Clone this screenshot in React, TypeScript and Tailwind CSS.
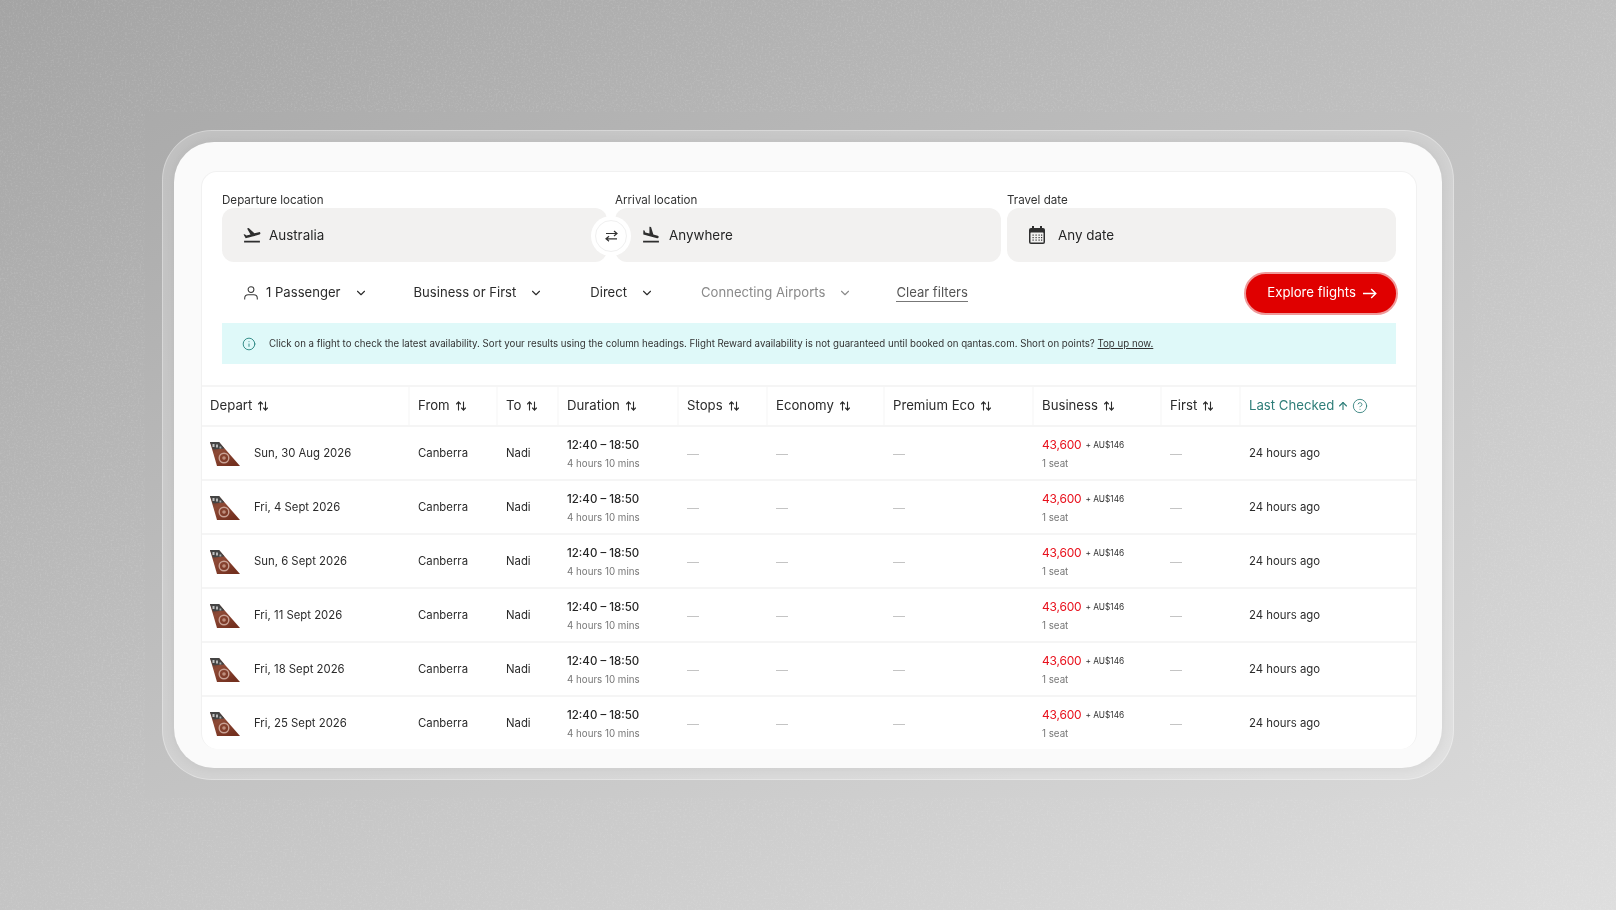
import React from "react";
import { ArrowUp, ArrowUpDown, ChevronDown, CircleHelp, Info } from "lucide-react";
import { MdFlightLand, MdFlightTakeoff } from "react-icons/md";

const cols = "grid grid-cols-[208px_88px_61px_120px_89px_117px_149px_128px_79px_1fr]";

const rows = [
  "Sun, 30 Aug 2026",
  "Fri, 4 Sept 2026",
  "Sun, 6 Sept 2026",
  "Fri, 11 Sept 2026",
  "Fri, 18 Sept 2026",
  "Fri, 25 Sept 2026",
];

const headers = ["Depart", "From", "To", "Duration", "Stops", "Economy", "Premium Eco", "Business", "First"];

function Tail() {
  return (
    <svg width="30" height="25" viewBox="0 0 30 25" className="shrink-0 blur-[0.4px]">
      <defs>
        <linearGradient id="tailg" x1="0" y1="0" x2="0.7" y2="1">
          <stop offset="0" stopColor="#5a3026" />
          <stop offset="0.4" stopColor="#8e4a36" />
          <stop offset="1" stopColor="#74301f" />
        </linearGradient>
      </defs>
      <polygon points="0,1 9,1 30,25 7,25" fill="url(#tailg)" />
      <polygon points="0,1 9,1 14.5,7.5 3,8.5" fill="#444444" />
      <rect x="2.5" y="3" width="2" height="3" fill="#c4c4c4" />
      <rect x="6" y="3.5" width="2" height="3" fill="#b8b8b8" />
      <rect x="9.5" y="5.5" width="1.8" height="2" fill="#aaaaaa" />
      <circle cx="14" cy="17" r="4.8" fill="none" stroke="#c9a194" strokeWidth="1.4" />
      <circle cx="14" cy="17" r="1.8" fill="#bd8d7c" />
    </svg>
  );
}

function Calendar() {
  return (
    <svg width="16" height="18" viewBox="0 0 16 18" className="shrink-0">
      <rect x="3" y="0" width="2" height="3.5" fill="#2f2f2f" />
      <rect x="11" y="0" width="2" height="3.5" fill="#2f2f2f" />
      <rect x="0" y="2" width="16" height="16" rx="2" fill="#2f2f2f" />
      <rect x="1.5" y="6.5" width="13" height="10" rx="0.6" fill="#f2f1f0" />
      {[3.5, 6.5, 9.5, 12].map((x) =>
        [8.5, 11, 13.5].map((y) => <rect key={`${x}-${y}`} x={x} y={y} width="1.2" height="1.2" fill="#2f2f2f" />)
      )}
    </svg>
  );
}

function Person() {
  return (
    <svg width="14" height="14" viewBox="0 0 14 14" fill="none" stroke="#3a3a3a" strokeWidth="1.05" className="shrink-0">
      <circle cx="7" cy="3.6" r="2.9" />
      <path d="M0.7 13.5v-1.2c0-2.2 1.6-3.6 3.6-3.6h5.4c2 0 3.6 1.4 3.6 3.6v1.2" />
    </svg>
  );
}

function Swap() {
  return (
    <svg width="13" height="12" viewBox="0 0 13 12" fill="none" stroke="#333" strokeWidth="1.2">
      <path d="M1 3.5h11M9 1l3 2.5L9 6" />
      <path d="M12 8.8H1M4 6.3L1 8.8l3 2.5" />
    </svg>
  );
}

function Field({ label, className, children }: { label: string; className: string; children: React.ReactNode }) {
  return (
    <div className={className}>
      <div className="h-[16px] text-[11.6px] leading-[16px] text-[#333333]">{label}</div>
      <div className="h-[54px] text-[13.4px] text-[#262626]">{children}</div>
    </div>
  );
}

function Filter({ label, muted, className = "" }: { label: string; muted?: boolean; className?: string }) {
  return (
    <div className={`flex items-center gap-[13px] ${muted ? "text-[#8a8a8a]" : "text-[#2b2b2b]"} ${className}`}>
      <span>{label}</span>
      <ChevronDown size={14} strokeWidth={1.9} />
    </div>
  );
}

function Dash() {
  return <span className="text-[12px] text-[#c4c4c4]">—</span>;
}

export default function App() {
  return (
    <div
      className="relative h-[910px] w-full overflow-hidden bg-[linear-gradient(155deg,#a4a4a4_0%,#bcbcbc_40%,#cdcdcd_70%,#dedede_100%)] pl-[162px] pt-[130px]"
      style={{ fontFamily: "Inter, 'Liberation Sans', sans-serif" }}
    >
      <svg className="pointer-events-none absolute inset-0 h-full w-full">
        <defs>
          <filter id="noise" x="0" y="0" width="100%" height="100%">
            <feTurbulence type="fractalNoise" baseFrequency="0.55" numOctaves="2" seed="4" />
            <feColorMatrix type="matrix" values="0 0 0 0 1  0 0 0 0 1  0 0 0 0 1  0 0 0 2.2 -1.05" />
            <feGaussianBlur stdDeviation="0.4" />
          </filter>
          <clipPath id="noiseclip">
            <path clipRule="evenodd" d="M0 0H1616V910H0ZM145 112V798H1472V112Z" />
          </clipPath>
        </defs>
        <g clipPath="url(#noiseclip)" opacity="0.14">
          <rect width="100%" height="100%" filter="url(#noise)" />
        </g>
      </svg>

      <div className="relative h-[650px] w-[1292px] rounded-[50px] border border-white/30 bg-white/25 p-[11px] blur-[0.3px]">
        <div className="h-full w-full rounded-[40px] bg-[#fafafa] pb-[19px] pl-[27px] pr-[25px] pt-[29px] shadow-[0_0_12px_rgba(0,0,0,0.07)]">
          <div className="h-full overflow-hidden rounded-[16px] border border-b-0 border-[#f1f1f1] bg-white">
            <div className="px-[20px] pb-[21px] pt-[20px]">
              <div className="flex">
                <Field label="Departure location" className="w-[393px]">
                  <div className="flex h-full w-[385px] items-center gap-[7px] rounded-[12px] bg-[#f2f1f0] pl-[20px]">
                    <MdFlightTakeoff size={20} color="#2f2f2f" />
                    <span>Australia</span>
                  </div>
                </Field>
                <Field label="Arrival location" className="relative w-[392px]">
                  <div className="flex h-full w-[386px] items-center gap-[8px] rounded-[12px] bg-[#f2f1f0] pl-[26px]">
                    <MdFlightLand size={20} color="#2f2f2f" />
                    <span>Anywhere</span>
                  </div>
                  <div className="absolute left-[-24px] top-[24px] flex h-[40px] w-[40px] items-center justify-center rounded-full bg-white">
                    <div className="flex h-[32px] w-[32px] items-center justify-center rounded-full border border-[#f0f0f0] bg-white">
                      <Swap />
                    </div>
                  </div>
                </Field>
                <Field label="Travel date" className="w-[389px]">
                  <div className="flex h-full items-center gap-[13px] rounded-[12px] bg-[#f2f1f0] pl-[22px]">
                    <Calendar />
                    <span>Any date</span>
                  </div>
                </Field>
              </div>

              <div className="mt-[9px] flex h-[44px] items-center text-[13.1px]">
                <div className="ml-[22px] flex items-center gap-[47px]">
                  <div className="flex items-center gap-[13px] text-[#2b2b2b]">
                    <div className="flex items-center gap-[8px]">
                      <Person />
                      <span>1 Passenger</span>
                    </div>
                    <ChevronDown size={14} strokeWidth={1.9} />
                  </div>
                  <Filter label="Business or First" className="ml-[-1px]" />
                  <Filter label="Direct" />
                  <Filter label="Connecting Airports" muted />
                </div>
                <span className="ml-[44px] border-b border-[#777] leading-[17px] text-[#555]">Clear filters</span>
                <button className="ml-auto mr-[-2px] flex h-[43px] items-center gap-[7px] rounded-full border-2 border-[#ee9a9a] bg-[#e00000] pl-[21px] pr-[19px] text-[13.2px] text-white">
                  Explore flights
                  <svg width="14" height="11" viewBox="0 0 14 11" fill="none" stroke="white" strokeWidth="1.4">
                    <path d="M0 5.5h13M8.2 1l4.6 4.5-4.6 4.5" />
                  </svg>
                </button>
              </div>

              <div className="mt-[8px] flex h-[41px] items-center gap-[13px] bg-[#dff9f9] pl-[20px] text-[9.7px] text-[#333333]">
                <Info size={14} strokeWidth={1.5} color="#1f7f7a" />
                <span className="pt-[1px]">
                  Click on a flight to check the latest availability. Sort your results using the column headings. Flight
                  Reward availability is not guaranteed until booked on qantas.com. Short on points?{" "}
                  <span className="underline">Top up now.</span>
                </span>
              </div>
            </div>

            <div className={`${cols} h-[42px] border-y-2 border-[#f5f5f5] text-[13.2px] text-[#2b2b2b]`}>
              {headers.map((h) => (
                <div key={h} className="flex items-center gap-[5px] border-r-2 border-[#fafafa] pl-[8px]">
                  <span>{h}</span>
                  <ArrowUpDown size={12} strokeWidth={2.2} />
                </div>
              ))}
              <div className="flex items-center gap-[3px] pl-[8px] text-[#2d7d78]">
                <span>Last Checked</span>
                <ArrowUp size={12} strokeWidth={2.2} />
                <CircleHelp size={16} strokeWidth={1.3} />
              </div>
            </div>

            {rows.map((date) => (
              <div key={date} className={`${cols} h-[54px] items-center border-b-2 border-[#f5f5f5] text-[11.35px] text-[#2b2b2b]`}>
                <div className="flex items-center gap-[14px] pl-[8px]">
                  <Tail />
                  <span className="pt-[2px]">{date}</span>
                </div>
                <div className="pl-[8px] pt-[2px]">Canberra</div>
                <div className="pl-[8px] pt-[2px]">Nadi</div>
                <div className="pl-[8px]">
                  <div className="pt-[1px] text-[11.5px] font-medium leading-[18px] text-[#262626]">12:40 – 18:50</div>
                  <div className="mt-[2px] text-[9.75px] leading-[16px] text-[#777]">4 hours 10 mins</div>
                </div>
                <div className="pl-[8px] pt-[2px]"><Dash /></div>
                <div className="pl-[8px] pt-[2px]"><Dash /></div>
                <div className="pl-[8px] pt-[2px]"><Dash /></div>
                <div className="pl-[8px]">
                  <div className="flex items-center gap-[4px] pt-[1px] leading-[18px]">
                    <span className="text-[12px] tracking-[-0.2px] text-[#e8101c]">43,600</span>
                    <span className="text-[8.3px] text-[#333333]">+ AU$146</span>
                  </div>
                  <div className="mt-[2px] text-[9.75px] leading-[16px] text-[#777]">1 seat</div>
                </div>
                <div className="pl-[8px] pt-[2px]"><Dash /></div>
                <div className="pl-[8px] pt-[2px]">24 hours ago</div>
              </div>
            ))}
          </div>
        </div>
      </div>
    </div>
  );
}
